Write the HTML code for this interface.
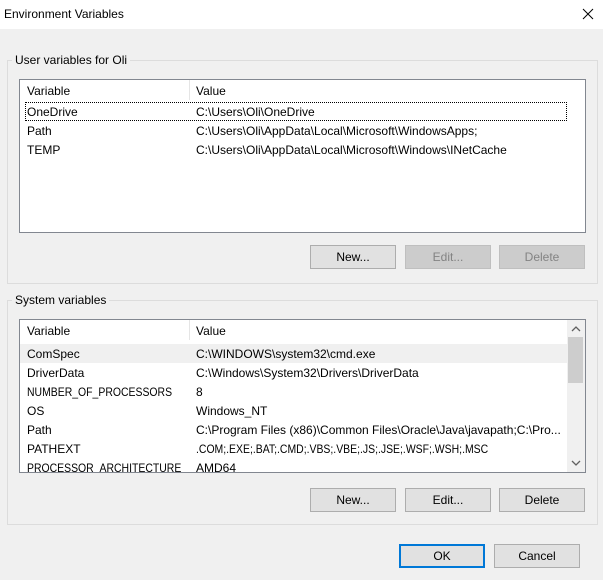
<!DOCTYPE html>
<html><head><style>
*{margin:0;padding:0;box-sizing:border-box}
body{width:603px;height:580px;background:#f0f0f0;font:12px "Liberation Sans",sans-serif;color:#000;position:relative;overflow:hidden}
.abs{position:absolute}
.title{left:0;top:0;width:603px;height:29px;background:#fff}
.grp{border:1px solid #dcdcdc}
.lbl{background:#f0f0f0;padding:0 3px;white-space:nowrap}
.list{background:#fff;border:1px solid #828790}
.t{position:absolute;white-space:nowrap}
.sq{transform:scaleX(0.87);transform-origin:left}
.btn{position:absolute;background:#e1e1e1;border:1px solid #adadad;text-align:center;line-height:22px;height:24px;width:86px}
.dis{background:#cccccc;border-color:#bfbfbf;color:#838383}
</style></head><body>
<div class="abs title"></div>
<div class="t" style="left:4px;top:7px">Environment Variables</div>
<svg class="abs" style="left:582px;top:8px" width="12" height="12"><path d="M1 1L11 11M11 1L1 11" stroke="#000" stroke-width="1"/></svg>

<div class="abs grp" style="left:7px;top:60px;width:591px;height:224px"></div>
<div class="abs lbl" style="left:12px;top:53px">User variables for Oli</div>
<div class="abs list" style="left:19px;top:79px;width:567px;height:154px"></div>
<div class="abs" style="left:189px;top:80px;width:1px;height:20px;background:#e5e5e5"></div>
<div class="t" style="left:27px;top:84px">Variable</div>
<div class="t" style="left:196px;top:84px">Value</div>
<div class="abs" style="left:25px;top:102px;width:542px;height:19px;border:1px dotted #000"></div>
<div class="t" style="left:27px;top:105px">OneDrive</div><div class="t" style="left:196px;top:105px">C:\Users\Oli\OneDrive</div>
<div class="t" style="left:27px;top:124px">Path</div><div class="t" style="left:196px;top:124px">C:\Users\Oli\AppData\Local\Microsoft\WindowsApps;</div>
<div class="t" style="left:27px;top:143px">TEMP</div><div class="t" style="left:196px;top:143px">C:\Users\Oli\AppData\Local\Microsoft\Windows\INetCache</div>
<div class="btn" style="left:310px;top:245px">New...</div>
<div class="btn dis" style="left:405px;top:245px">Edit...</div>
<div class="btn dis" style="left:499px;top:245px">Delete</div>

<div class="abs grp" style="left:7px;top:300px;width:591px;height:225px"></div>
<div class="abs lbl" style="left:12px;top:293px">System variables</div>
<div class="abs list" style="left:19px;top:319px;width:567px;height:154px"></div>
<div class="abs" style="left:189px;top:320px;width:1px;height:20px;background:#e5e5e5"></div>
<div class="t" style="left:27px;top:324px">Variable</div>
<div class="t" style="left:196px;top:324px">Value</div>
<div class="abs" style="left:20px;top:344px;width:547px;height:19px;background:#f0f0f0"></div>
<div class="abs" style="left:567px;top:320px;width:18px;height:152px;background:#f0f0f0"></div>
<div class="abs" style="left:568px;top:337px;width:15px;height:46px;background:#cdcdcd"></div>
<svg class="abs" style="left:571px;top:325px" width="10" height="8"><path d="M1 6L5 2L9 6" stroke="#606060" fill="none" stroke-width="1.3"/></svg>
<svg class="abs" style="left:571px;top:459px" width="10" height="8"><path d="M1 2L5 6L9 2" stroke="#606060" fill="none" stroke-width="1.3"/></svg>
<div class="t" style="left:27px;top:347px">ComSpec</div><div class="t" style="left:196px;top:347px">C:\WINDOWS\system32\cmd.exe</div>
<div class="t" style="left:27px;top:366px">DriverData</div><div class="t" style="left:196px;top:366px">C:\Windows\System32\Drivers\DriverData</div>
<div class="t sq" style="left:27px;top:385px">NUMBER_OF_PROCESSORS</div><div class="t" style="left:196px;top:385px">8</div>
<div class="t" style="left:27px;top:404px">OS</div><div class="t" style="left:196px;top:404px">Windows_NT</div>
<div class="t" style="left:27px;top:423px">Path</div><div class="t" style="left:196px;top:423px">C:\Program Files (x86)\Common Files\Oracle\Java\javapath;C:\Pro...</div>
<div class="t" style="left:27px;top:442px">PATHEXT</div><div class="t sq" style="left:196px;top:442px">.COM;.EXE;.BAT;.CMD;.VBS;.VBE;.JS;.JSE;.WSF;.WSH;.MSC</div>
<div class="abs" style="left:20px;top:459px;width:547px;height:13px;overflow:hidden"><div class="t sq" style="left:7px;top:2px">PROCESSOR_ARCHITECTURE</div><div class="t" style="left:176px;top:2px">AMD64</div></div>
<div class="btn" style="left:310px;top:488px">New...</div>
<div class="btn" style="left:405px;top:488px">Edit...</div>
<div class="btn" style="left:499px;top:488px">Delete</div>

<div class="btn" style="left:399px;top:544px;border:2px solid #0078d7;line-height:20px">OK</div>
<div class="btn" style="left:494px;top:544px">Cancel</div>
</body></html>
